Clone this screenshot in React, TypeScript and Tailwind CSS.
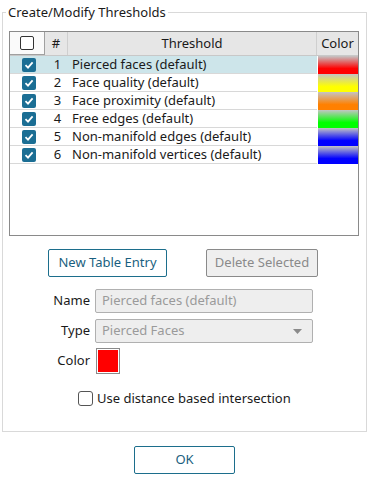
import React from "react";

const rows = [
  { n: 1, name: "Pierced faces (default)", color: "#ff0000", sel: true },
  { n: 2, name: "Face quality (default)", color: "#ffff00" },
  { n: 3, name: "Face proximity (default)", color: "#ff8000" },
  { n: 4, name: "Free edges (default)", color: "#00ff00" },
  { n: 5, name: "Non-manifold edges (default)", color: "#0000ff" },
  { n: 6, name: "Non-manifold vertices (default)", color: "#0000ff" },
];

function Check({ checked }: { checked: boolean }) {
  if (checked)
    return (
      <div className="w-[14px] h-[14px] rounded-[2px] bg-[#1b6e94] flex items-center justify-center">
        <svg width="10" height="10" viewBox="0 0 10 10">
          <path d="M1.5 5.2 L4 7.6 L8.6 2.4" stroke="white" strokeWidth="1.8" fill="none" />
        </svg>
      </div>
    );
  return <div className="w-[14px] h-[14px] rounded-[2px] bg-white border border-[#333]" />;
}

export default function App() {
  return (
    <div
      className="w-[370px] h-[490px] bg-white text-[13px] text-[#1a1a1a] overflow-hidden"
      style={{ fontFamily: '"Noto Sans", "Open Sans", sans-serif' }}
    >
      <div className="relative mt-[12px] ml-[2px] w-[365px] h-[420px] border border-[#d9d9d9] pt-[18px] px-[6px]">
        <div className="absolute left-[3px] top-[-10px] bg-white px-[2px] leading-[18px]">
          Create/Modify Thresholds
        </div>
        {/* table */}
        <div className="w-[350px] h-[205px] border border-[#8a8a8a] bg-white">
          <div className="flex h-[24px] bg-[#e6e6e6] border-b border-[#c8c8c8]">
            <div className="w-[35px] bg-[#fafafa] border-r border-b border-[#a0a0a0] flex items-center justify-center">
              <div className="w-[14px] h-[14px] rounded-[2px] bg-white border border-[#333]" />
            </div>
            <div className="w-[23px] border-r border-[#cfcfcf] flex items-center justify-center">#</div>
            <div className="w-[249px] border-r border-[#cfcfcf] flex items-center justify-center">Threshold</div>
            <div className="w-[41px] flex items-center justify-center">Color</div>
          </div>
          {rows.map((r) => (
            <div key={r.n} className="flex h-[18px]">
              <div className={`flex w-[307px] border-b border-[#d8d8d8] ${r.sel ? "bg-[#cde5ea]" : ""}`}>
                <div className="w-[36px] flex items-center justify-center pl-[2px]">
                  <Check checked />
                </div>
                <div className="w-[23px] flex items-center justify-center leading-[17px]">{r.n}</div>
                <div className="flex-1 pl-[3px] leading-[17px] whitespace-nowrap">{r.name}</div>
              </div>
              <div
                className="w-[40px] ml-[1px]"
                style={{ background: `linear-gradient(to bottom, #c4c4c4 0%, ${r.color} 70%)` }}
              />
            </div>
          ))}
        </div>
        {/* buttons */}
        <div className="flex mt-[13px]">
          <button className="ml-[39px] w-[119px] h-[28px] border border-[#1c6e8c] rounded-[2px] text-[#1a5f80] bg-white">
            New Table Entry
          </button>
          <button className="ml-[39px] w-[112px] h-[28px] border border-[#8a8a8a] rounded-[2px] text-[#8a8a8a] bg-[#efefef]">
            Delete Selected
          </button>
        </div>
        {/* form */}
        <div className="mt-[12px] flex items-center">
          <div className="w-[81px] text-right">Name</div>
          <div className="ml-[5px] w-[218px] h-[24px] border border-[#b0b0b0] rounded-[2px] bg-[#eeeeee] text-[#9a9a9a] pl-[6px] flex items-center">
            Pierced faces (default)
          </div>
        </div>
        <div className="mt-[6px] flex items-center">
          <div className="w-[81px] text-right">Type</div>
          <div className="ml-[5px] w-[218px] h-[24px] border border-[#b0b0b0] rounded-[2px] bg-[#eeeeee] text-[#9a9a9a] pl-[6px] flex items-center justify-between pr-[10px]">
            <span>Pierced Faces</span>
            <svg width="9" height="5" viewBox="0 0 9 5">
              <path d="M0 0 L9 0 L4.5 5 Z" fill="#8a8a8a" />
            </svg>
          </div>
        </div>
        <div className="mt-[5px] flex items-center">
          <div className="w-[81px] text-right">Color</div>
          <div className="ml-[6px] w-[24px] h-[26px] border border-[#8a8a8a] p-[1px] bg-white">
            <div className="w-full h-full bg-[#ff0000]" />
          </div>
        </div>
        <div className="mt-[15px] flex items-center ml-[69px]">
          <div className="w-[15px] h-[15px] rounded-[3px] border border-[#555] bg-white" />
          <span className="ml-[4px]">Use distance based intersection</span>
        </div>
      </div>
      <div className="flex justify-center mt-[14px]">
        <button className="ml-[-1px] w-[101px] h-[28px] border border-[#1c6e8c] rounded-[2px] text-[#1a5f80] bg-white">
          OK
        </button>
      </div>
    </div>
  );
}
